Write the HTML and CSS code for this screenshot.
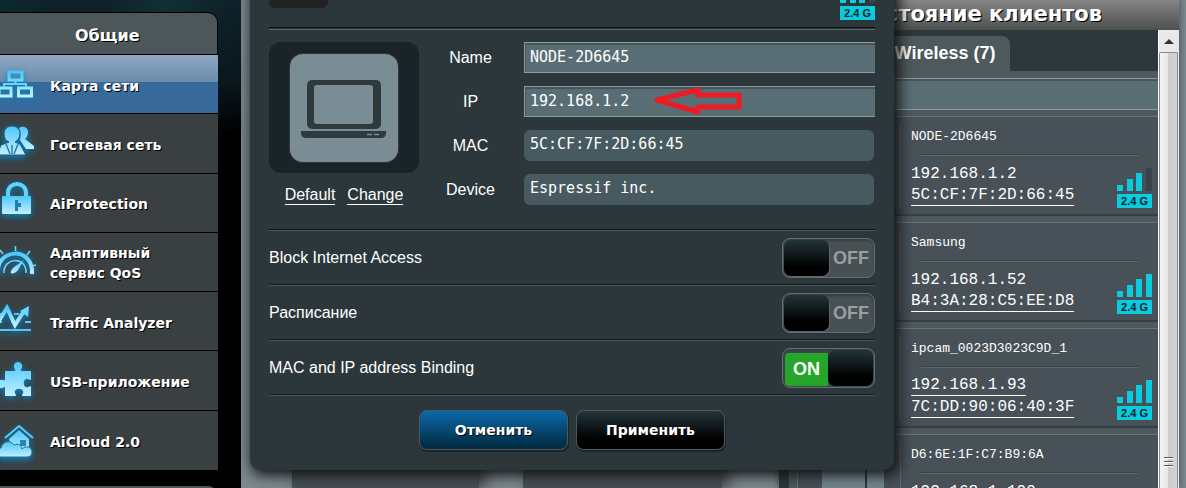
FILE: index.html
```html
<!DOCTYPE html>
<html lang="ru">
<head>
  <meta charset="UTF-8" />
  <meta name="viewport" content="width=device-width,initial-scale=1.0"/>
  <title>Карта сети</title>
  <link rel="stylesheet" href="styles.css">
</head>
<body>
  <!-- shared icon shapes -->
  <svg class="defs" width="0" height="0" aria-hidden="true">
    <defs>
      <linearGradient id="ice" x1="0" y1="0" x2="0" y2="1">
        <stop offset="0" stop-color="#4cc8fb"/>
        <stop offset="1" stop-color="#c4efff"/>
      </linearGradient>
      <symbol id="bars3" viewBox="0 0 35 23">
        <path fill="#0bcbdf" d="M0 17h6v6H0zM10 11h6v12h-6zM19 5h6v18h-6z"/>
        <path fill="#35454b" d="M29 0h6v23h-6z"/>
      </symbol>
      <symbol id="bars4" viewBox="0 0 35 23">
        <path fill="#0bcbdf" d="M0 17h6v6H0zM10 11h6v12h-6zM19 5h6v18h-6zM29 0h6v23h-6z"/>
      </symbol>
    </defs>
  </svg>

  <div class="page">
    <nav class="sidebar">
      <div class="menu-title">Общие</div>
      <div class="menu">
        <a class="menu-item active" href="#">
          <svg class="menu-icon" viewBox="0 0 40 40">
            <path fill="none" stroke="url(#ice)" stroke-width="3" d="M9 8h13v8H9zM-1 24h12v8H-1zM18.500 24h13v8h-13z"/>
            <path fill="none" stroke="#6cd2fa" stroke-width="2" d="M15.500 17v4M4 23v-3h22v3"/>
          </svg>
          <span>Карта сети</span>
        </a>
        <a class="menu-item" href="#">
          <svg class="menu-icon" viewBox="0 0 40 40">
            <path fill="url(#ice)" d="M19 5c5-3 9 0 9 4 0 3-1 5-3 7l9 7v3h-8l-6-9c1-3 1-8-1-12z"/>
            <path fill="url(#ice)" stroke="#20556e" stroke-width="1" d="M12 3c5 0 8 3 8 8 0 4-3 7-5 8l5 2 6 11H-3l4-10 8-3c-3-1-5-4-5-8 0-5 3-8 8-8z"/>
            <path fill="none" stroke="#2a7ea6" stroke-width="1.500" d="M6 21l4 10M18 21l-4 10M12 22v9"/>
          </svg>
          <span>Гостевая сеть</span>
        </a>
        <a class="menu-item" href="#">
          <svg class="menu-icon" viewBox="0 0 40 40">
            <path fill="none" stroke="#63d2fb" stroke-width="4" d="M8 14v-4c0-12 18-12 18 0v4"/>
            <rect x="2" y="13" width="29" height="18" rx="1" fill="url(#ice)"/>
            <path fill="#217fa8" d="M15 17h3v3h3v4h-3v4h-3z"/>
          </svg>
          <span>AiProtection</span>
        </a>
        <a class="menu-item" href="#">
          <svg class="menu-icon" viewBox="0 0 40 40">
            <path fill="none" stroke="url(#ice)" stroke-width="4" d="M-2 31c-2-25 36-27 34 1"/>
            <path fill="none" stroke="#75d6fb" stroke-width="1.500" d="M4 31c-1-16 23-17 22 0M15.500 9V4M3 12L0 8M27 13l3-4M32 24l4-1"/>
            <path fill="url(#ice)" d="M24 18l-6 10c-2 3-6 4-7 3s1-4 3-6z"/>
          </svg>
          <span>Адаптивный<br>сервис QoS</span>
        </a>
        <a class="menu-item" href="#">
          <svg class="menu-icon" viewBox="0 0 40 40">
            <path fill="none" stroke="#55c6ef" stroke-width="2" d="M0 13h4M14 13h5M25 21h6M0 21h2M11 21h2M0 29h31"/>
            <path fill="none" stroke="url(#ice)" stroke-width="4" d="M-3 23L7 7l8 17 9-14"/>
            <path fill="#73d6fc" d="M29 5l-1 11-8-6z"/>
          </svg>
          <span>Traffic Analyzer</span>
        </a>
        <a class="menu-item" href="#">
          <svg class="menu-icon" viewBox="0 0 40 40">
            <path fill="url(#ice)" d="M5 10h10c1-2-2-3-1-6 1-4 7-4 8 0 1 3-2 4-1 6h10v9c-2 0-3-2-5-1-3 1-3 7 0 8 2 1 3-1 5-1v10h-9c0-2 2-3 1-5-1-3-7-3-8 0-1 2 1 3 1 5H5V26c-2 0-3 2-5 1-3-1-3-7 0-8 2-1 3 1 5 0z"/>
          </svg>
          <span>USB-приложение</span>
        </a>
        <a class="menu-item" href="#">
          <svg class="menu-icon" viewBox="0 0 40 40">
            <path fill="none" stroke="#58cdfa" stroke-width="2" d="M5 18L19 6l14 12"/>
            <path fill="url(#ice)" d="M9 19l10-9 10 9v14H12z"/>
            <path fill="#2a86ad" d="M20 20h6v6h-6z"/>
            <path fill="url(#ice)" stroke="#2b6f8e" stroke-width="1" d="M1 37c-6 0-6-9 0-9 1-6 9-9 13-3 4-2 8 0 8 4 4-4 10-2 10 3 0 3-2 5-5 5z"/>
          </svg>
          <span>AiCloud 2.0</span>
        </a>
      </div>
      <div class="menu-title next"></div>
    </nav>

    <main class="content">
      <div class="map">
        <div class="map-card"></div>
        <div class="map-card wide"></div>
      </div>

      <section class="clients">
        <h2 class="clients-title">Состояние клиентов</h2>
        <div class="clients-frame">
          <div class="clients-body">
            <div class="tabs">
              <button class="tab" type="button">Wireless (7)</button>
            </div>
            <div class="client-list">
              <input class="field search" type="text" aria-label="Поиск клиента">
              <div class="client">
                <div class="client-pic"></div>
                <div class="client-info">
                  <div class="client-name">NODE-2D6645</div>
                  <div class="client-row">
                    <div class="client-addr"><span>192.168.1.2</span><a href="#">5C:CF:7F:2D:66:45</a></div>
                    <div class="signal"><svg><use href="#bars3"/></svg><b>2.4 G</b></div>
                  </div>
                </div>
              </div>
              <div class="client">
                <div class="client-pic"></div>
                <div class="client-info">
                  <div class="client-name">Samsung</div>
                  <div class="client-row">
                    <div class="client-addr"><span>192.168.1.52</span><a href="#">B4:3A:28:C5:EE:D8</a></div>
                    <div class="signal"><svg><use href="#bars4"/></svg><b>2.4 G</b></div>
                  </div>
                </div>
              </div>
              <div class="client">
                <div class="client-pic"></div>
                <div class="client-info">
                  <div class="client-name">ipcam_0023D3023C9D_1</div>
                  <div class="client-row">
                    <div class="client-addr"><a href="#">192.168.1.93</a><a href="#">7C:DD:90:06:40:3F</a></div>
                    <div class="signal"><svg><use href="#bars4"/></svg><b>2.4 G</b></div>
                  </div>
                </div>
              </div>
              <div class="client">
                <div class="client-pic"></div>
                <div class="client-info">
                  <div class="client-name">D6:6E:1F:C7:B9:6A</div>
                  <div class="client-row">
                    <div class="client-addr"><span>192.168.1.100</span></div>
                  </div>
                </div>
              </div>
            </div>
          </div>
          <div class="scrollbar">
            <div class="scroll-up"><svg viewBox="0 0 10 6"><path d="M0 6l5-5 5 5z" fill="#333"/></svg></div>
            <div class="scroll-thumb"><i></i><i></i><i></i></div>
          </div>
        </div>
      </section>

      <!-- client details popup -->
      <form class="popup">
        <div class="popup-head">
          <span class="chip">Manual</span>
          <div class="signal"><svg><use href="#bars3"/></svg><b>2.4 G</b></div>
        </div>
        <div class="details">
          <div class="device">
            <div class="device-box">
              <svg class="device-icon" viewBox="0 0 108 108">
                <rect x="17" y="26" width="74" height="49" rx="5" fill="#2f3a3c"/>
                <rect x="24" y="31" width="59" height="39" rx="3" fill="#7a8d94"/>
                <path fill="#2f3a3c" d="M11 77h85v2c0 3-2 5-5 5H16c-3 0-5-2-5-5z"/>
                <path stroke="#7a8d94" stroke-width="1.500" d="M77 80.500h5M84 80.500h5"/>
              </svg>
            </div>
            <div class="device-links">
              <a href="#">Default</a>
              <a href="#">Change</a>
            </div>
          </div>
          <div class="fields">
            <div class="row">
              <label for="name">Name</label>
              <input class="field" id="name" type="text" value="NODE-2D6645">
            </div>
            <div class="row">
              <label for="ip">IP</label>
              <input class="field" id="ip" type="text" value="192.168.1.2">
              <svg class="arrow" viewBox="0 0 92 30"><path fill="none" stroke="#ed1c24" stroke-width="5" stroke-linejoin="round" d="M5 14L46 4v5h41v12H46v5z"/></svg>
            </div>
            <div class="row">
              <label for="mac">MAC</label>
              <input class="readonly" id="mac" type="text" value="5C:CF:7F:2D:66:45" readonly>
            </div>
            <div class="row">
              <label for="vendor">Device</label>
              <input class="readonly" id="vendor" type="text" value="Espressif inc." readonly>
            </div>
          </div>
        </div>
        <label class="option">
          <span>Block Internet Access</span>
          <input class="switch" type="checkbox">
        </label>
        <label class="option">
          <span>Расписание</span>
          <input class="switch" type="checkbox">
        </label>
        <label class="option">
          <span>MAC and IP address Binding</span>
          <input class="switch" type="checkbox" checked>
        </label>
        <div class="buttons">
          <button class="btn btn-blue" type="button">Отменить</button>
          <button class="btn" type="button">Применить</button>
        </div>
      </form>
    </main>
  </div>
</body>
</html>
```

FILE: styles.css
```css
html, body {
  height: 100%;
  margin: 0;
  overflow: hidden;
  font-family: "Liberation Sans", Arial, sans-serif;
  font-size: 16px;
  color: #fff;
  background: #000;
}
* {
  box-sizing: border-box;
}
a {
  color: #fff;
}
.defs {
  position: absolute;
}
.page {
  display: flex;
  gap: 23px;
  height: 100%;
  background:
    radial-gradient(circle at 165px 0, #123036 0, transparent 60px),
    radial-gradient(circle at 0 0, #0b2a2e 0, transparent 50px),
    linear-gradient(#0e2229 0, #0b181e 80px, #000 135px);
}

/* left menu */
.sidebar {
  width: 218px;
  flex-shrink: 0;
  padding-top: 12px;
  overflow: hidden;
  font-family: "DejaVu Sans", Verdana, sans-serif;
  font-weight: bold;
  text-shadow: 1px 1px 0 #000;
}
.menu-title {
  height: 43px;
  padding-left: 75px;
  font-size: 16px;
  line-height: 46px;
  background: #4d5659;
  border: 1px solid #000;
  border-left: none;
  border-radius: 0 10px 0 0;
}
.menu-title.next {
  margin-top: 15px;
}
.menu {
  display: grid;
  grid-auto-rows: 1fr;
  min-height: 415px;
}
.menu-item {
  display: flex;
  align-items: center;
  gap: 10px;
  font-size: 14px;
  line-height: 20px;
  text-decoration: none;
  background: #3a3f42;
  border-bottom: 1px solid #000;
}
.menu-item.active {
  background: linear-gradient(#8ea8c2 0, #6c8cab 46%, #376a9a 46%, #38699a 100%);
}
.menu-item:last-child {
  border-bottom: none;
}
.menu-item span {
  padding-top: 3px;
}
.menu-icon {
  width: 40px;
  height: 40px;
  flex-shrink: 0;
  overflow: visible;
  filter: drop-shadow(0 2px 3px #0088c8);
}

/* page behind the popup */
.content {
  position: relative;
  display: flex;
  flex: 1;
  justify-content: space-between;
  background: #7c898e;
}
.map {
  display: flex;
  gap: 44px;
  padding-left: 51px;
}
.map-card {
  width: 187px;
  background: #465055;
  box-shadow: 6px 0 14px #3c3c3c;
}
.map-card.wide {
  width: 199px;
}

/* clients list */
.clients {
  display: flex;
  flex-direction: column;
  width: 400px;
  margin-right: 7px;
  overflow: hidden;
  box-shadow: 0 0 8px #3a4549;
}
.clients-title {
  margin: 0;
  height: 30px;
  flex-shrink: 0;
  font-family: "DejaVu Sans", Verdana, sans-serif;
  font-size: 21px;
  line-height: 28px;
  text-align: center;
  text-shadow: 1px 1px 0 #000;
  background: linear-gradient(#858685, #4c504f);
}
.clients-frame {
  display: flex;
  flex: 1;
  min-height: 0;
  background: #2d383c;
}
.clients-body {
  flex: 1;
  padding-left: 10px;
}
.tabs {
  display: flex;
  padding: 6px 0 0 91px;
}
.tab {
  width: 130px;
  height: 35px;
  border: none;
  border-radius: 0 8px 0 0;
  background: #4d595d;
  color: #fff;
  font-family: inherit;
  font-size: 18px;
  font-weight: bold;
}
.client-list {
  display: flex;
  flex-direction: column;
  gap: 6px;
  padding: 7px 0 0 8px;
  background: #4d595d;
}
.client {
  display: flex;
  align-items: center;
  height: 100px;
  flex-shrink: 0;
  padding-left: 24px;
  background: #475157;
  border: 1px solid #67757a;
  border-right: none;
  border-bottom: 2px solid #363f43;
}
.client-pic {
  width: 62px;
  height: 66px;
  background: linear-gradient(90deg, #74868d 43px, #2d383c 43px, #2d383c 45px, #74868d 45px);
}
.client-info {
  flex: 1;
  height: 84px;
  margin-left: 16px;
  padding: 5px 6px 0 10px;
  border-left: 1px solid #5b686d;
  font-family: "Liberation Mono", "Courier New", monospace;
}
.client-name {
  font-size: 13px;
  line-height: 16px;
}
.client-name::after {
  content: "";
  display: block;
  margin: 9px 14px 8px 10px;
  border-top: 1px solid #3a4448;
  border-bottom: 1px solid #5b686d;
}
.client-row {
  display: flex;
  justify-content: space-between;
  align-items: flex-start;
}
.client-row .signal {
  padding-top: 4px;
}
.client-addr {
  display: flex;
  flex-direction: column;
  align-items: flex-start;
  gap: 2px;
  line-height: 20px;
}
.client-addr a {
  text-decoration: none;
  line-height: 19px;
  border-bottom: 1px solid #fff;
}
.signal {
  display: flex;
  flex-direction: column;
  gap: 3px;
  width: 35px;
}
.signal svg {
  width: 35px;
  height: 23px;
}
.signal b {
  font-family: "Liberation Sans", Arial, sans-serif;
  font-size: 11px;
  line-height: 14px;
  text-align: center;
  color: #00242c;
  background: #0bcbdf;
}
.scrollbar {
  display: flex;
  flex-direction: column;
  width: 21px;
  background: #e9e9e9;
  border-left: 1px solid #fff;
}
.scroll-up {
  height: 22px;
  display: flex;
  align-items: center;
  justify-content: center;
}
.scroll-up svg {
  width: 10px;
  height: 6px;
}
.scroll-thumb {
  display: flex;
  flex-direction: column;
  align-items: center;
  justify-content: flex-end;
  gap: 2px;
  flex: 1;
  margin-right: 1px;
  padding-bottom: 21px;
  background: linear-gradient(90deg, #f4f4f4 0, #e6e6e8 45%, #cdcdd0 50%, #d3d3d6 100%);
  border: 1px solid #8c8c8c;
  border-bottom: none;
  border-radius: 2px 2px 0 0;
}
.scroll-thumb i {
  width: 9px;
  height: 2px;
  border-top: 1px solid #555;
  border-bottom: 1px solid #fff;
}

/* text boxes */
.field {
  height: 31px;
  padding: 0 5px 2px;
  border: 1px solid #919b9e;
  border-right: none;
  border-radius: 0;
  outline: none;
  background: #596e74;
  box-shadow: inset 1px 2px 0 #46555a;
  color: #fff;
  font-family: "DejaVu Sans Mono", monospace;
  font-size: 15px;
}
.search {
  height: 32px;
}

/* popup */
.popup {
  position: absolute;
  top: -20px;
  left: 9px;
  width: 644px;
  padding: 0 19px 20px;
  border-radius: 10px;
  background: #2c373b;
  box-shadow: 3px 3px 14px 2px #111;
}
.popup-head {
  display: flex;
  justify-content: space-between;
  align-items: flex-start;
  height: 50px;
  border-bottom: 1px solid #596266;
  box-shadow: inset 0 -1px 0 #2c373b, inset 0 -2px 0 #0c1011;
}
.chip {
  padding: 10px 6px 6px;
  line-height: 12px;
  font-family: "DejaVu Sans Mono", monospace;
  font-size: 13px;
  font-weight: bold;
  border-radius: 6px;
  background: #222;
}
.details {
  display: flex;
  height: 201px;
  padding-top: 12px;
  border-bottom: 1px solid #4d5659;
  box-shadow: inset 0 -1px 0 #12181a;
}
.device {
  width: 150px;
}
.device-box {
  display: flex;
  align-items: center;
  justify-content: center;
  height: 131px;
  border-radius: 12px;
  background: #1a2327;
}
.device-icon {
  width: 108px;
  height: 108px;
  border-radius: 13px;
  background: #7a8d94;
  box-shadow: 0 0 1px 1px #35393a;
}
.device-links {
  display: flex;
  justify-content: center;
  gap: 12px;
  padding-top: 13px;
}
.device-links a {
  line-height: 18px;
  text-decoration: none;
  border-bottom: 1px solid #fff;
}
.fields {
  display: flex;
  flex-direction: column;
  gap: 13px;
  flex: 1;
}
.row {
  position: relative;
  display: flex;
  align-items: center;
}
.row label {
  width: 105px;
  padding-right: 2px;
  text-align: center;
}
.row input {
  flex: 1;
  min-width: 0;
}
.row .readonly {
  height: 31px;
  margin-right: 1px;
  padding: 0 6px 3px;
  border: none;
  border-radius: 6px;
  outline: none;
  background: #475a60;
  color: #fff;
  font-family: "DejaVu Sans Mono", monospace;
  font-size: 15px;
}
.arrow {
  position: absolute;
  top: 0;
  left: 233px;
  width: 92px;
  height: 30px;
}
.option {
  display: flex;
  align-items: center;
  justify-content: space-between;
  height: 55px;
  border-bottom: 1px solid #4d5659;
  box-shadow: inset 0 -1px 0 #12181a;
}
.switch {
  appearance: none;
  display: flex;
  align-items: center;
  width: 93px;
  height: 40px;
  margin: 0;
  padding: 1px;
  border: 1px solid #626e72;
  border-radius: 8px;
  background: #475154;
  box-shadow: inset 0 2px 2px #363f42;
  color: #9a9fa1;
  font-family: inherit;
  font-size: 18px;
  font-weight: bold;
}
.switch::before {
  content: "";
  width: 45px;
  height: 36px;
  border-radius: 7px;
  background: linear-gradient(#23343a, #000 75%);
  box-shadow: 1px 1px 0 #5c6568;
}
.switch::after {
  content: "OFF";
  flex: 1;
  text-align: center;
}
.switch:checked {
  flex-direction: row-reverse;
  padding-left: 2px;
  background: #3d484c;
  color: #fff;
}
.switch:checked::before {
  box-shadow: none;
}
.switch:checked::after {
  content: "ON";
  height: 33px;
  margin-top: 2px;
  line-height: 33px;
  border-radius: 4px 0 0 4px;
  background: #25a52a;
}
.buttons {
  display: flex;
  justify-content: center;
  gap: 8px;
  padding-top: 14px;
}
.btn {
  width: 149px;
  height: 40px;
  border: 1px solid #4e595d;
  border-radius: 8px;
  background: linear-gradient(#23343a, #000 75%);
  box-shadow: 1px 2px 1px #1c2427;
  color: #fff;
  font-family: "DejaVu Sans", Verdana, sans-serif;
  font-size: 14px;
  font-weight: bold;
  text-shadow: 1px 1px 0 #000;
}
.btn-blue {
  background: linear-gradient(#0b6aab, #012d46 90%);
}
```
